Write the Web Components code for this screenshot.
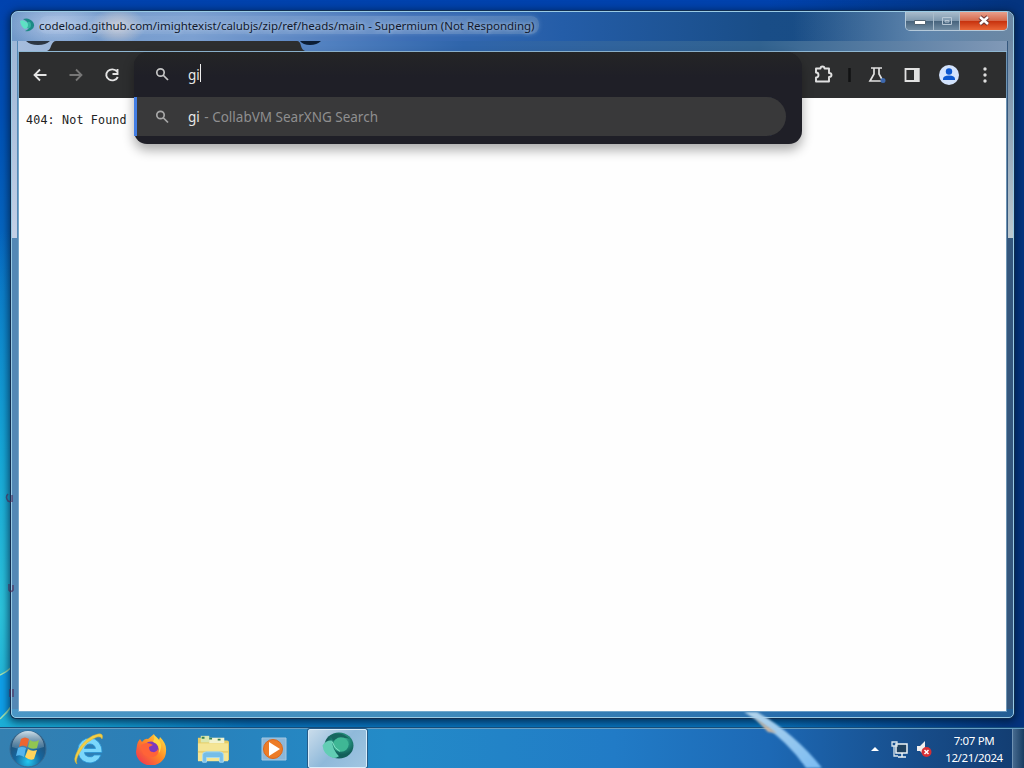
<!DOCTYPE html>
<html lang="en">
<head>
<meta charset="utf-8">
<title>Desktop</title>
<style>
	html, body { margin: 0; height: 100%; overflow: hidden; }
	body { font-family: "Noto Sans", "Open Sans", sans-serif; font-size: 12px; }
</style>
</head>
<body>
<win-desktop>
	<win-window slot="window">
		<span slot="title">codeload.github.com/imightexist/calubjs/zip/ref/heads/main - Supermium (Not Responding)</span>
		<browser-toolbar>
			<omni-box><span slot="typed">gi</span><span slot="match">gi</span><span slot="engine">CollabVM SearXNG Search</span></omni-box>
		</browser-toolbar>
		<page-view>404: Not Found</page-view>
	</win-window>
	<task-bar slot="taskbar">
		<task-icon name="start"></task-icon>
		<task-icon name="ie"></task-icon>
		<task-icon name="firefox"></task-icon>
		<task-icon name="explorer"></task-icon>
		<task-icon name="player"></task-icon>
		<task-icon name="supermium" active></task-icon>
		<system-tray slot="tray"><span slot="time">7:07 PM</span><span slot="date">12/21/2024</span></system-tray>
	</task-bar>
</win-desktop>
<script>
(function() {
	function define(name, html) {
		let template = document.createElement("template");
		template.innerHTML = html;
		customElements.define(name, class extends HTMLElement {
			constructor() {
				super();
				this.attachShadow({mode: "open"}).appendChild(template.content.cloneNode(true));
			}
		});
	}

	const icons = {
		// small title bar version of the app logo
		small: `<svg viewBox="0 0 15 14"><path d="M3 1Q9-1 13 4 16 9 11 12 8 14 5 13 11 10 9 6 7 3 3 1Z" fill="#1d8a86"/><path d="M0 3Q3 1 6 4L10 6Q9 10 5 11 1 9 0 3Z" fill="#5fe0c4"/><path d="M7 4q4-1 4 3t-4 3q2-3 0-6Z" fill="#35b3a0"/></svg>`,
		logo: `<svg viewBox="0 0 34 30"><defs><radialGradient id="g" cx=".6" cy=".35"><stop stop-color="#4fc4a2"/><stop offset=".55" stop-color="#228c79"/><stop offset="1" stop-color="#125f5a"/></radialGradient></defs><ellipse cx="18" cy="14" rx="15" ry="13.500" fill="url(#g)"/><path d="M1 14Q5 8 11 9Q11 18 18 25Q15 27 12 27Q2 24 1 14Z" fill="#62cdb4"/><path d="M9 4Q19-2 29 7Q20 4 12 9Z" fill="#17665f"/><ellipse cx="20" cy="13" rx="8" ry="7.500" fill="#3fb795"/><path d="M11 10Q13 17 19 20" fill="none" stroke="#88dfc8"/></svg>`,
		start: `<svg viewBox="0 0 38 38"><defs><radialGradient id="s" cx=".5" cy=".85" r=".8"><stop stop-color="#22c8f0"/><stop offset=".45" stop-color="#16659d"/><stop offset="1" stop-color="#274866"/></radialGradient><linearGradient id="h" x2="0" y2="1"><stop stop-color="#d7e9f3" stop-opacity=".95"/><stop offset="1" stop-color="#88a9be" stop-opacity=".25"/></linearGradient></defs><circle cx="19" cy="19" r="18" fill="url(#s)" stroke="#376990"/><path d="M3 17a16 16 0 0 1 32 0Q19 23 3 17Z" fill="url(#h)"/><path d="M12 9Q16 6 20 9L18 17Q14 14 10 17Z" fill="#ed6530"/><path d="M21 10Q25 13 30 10L28 18Q23 20 19 17Z" fill="#91c551"/><path d="M9 18Q13 16 17 18L15 27Q11 24 7 26Z" fill="#54b5ed"/><path d="M19 19Q23 22 28 20L25 29Q21 31 16 27Z" fill="#ffd45c"/></svg>`,
		ie: `<svg viewBox="0 0 32 32"><path fill-rule="evenodd" d="M17 5a12 12.500 0 1 0 11 17h-6.500a5.500 4.500 0 0 1-10-2.500H29A12 13.500 0 0 0 17 5Zm-5.500 10.500q1-4.500 5.500-4.500t5.500 4.500Z" fill="#7bd7fb" stroke="#2a93d3" stroke-width=".8"/><path d="M4 31Q-1 28 5 17 14 3 25 1q6-1 4 5-1-3-5-2Q13 8 7 19 2 27 4 31Z" fill="#f2cf45" stroke="#d7b338" stroke-width=".5"/></svg>`,
		firefox: `<svg viewBox="0 0 32 32"><defs><linearGradient id="f" x1="1" y1="0" x2="0" y2="1"><stop stop-color="#ffed4a"/><stop offset=".45" stop-color="#ff8b24"/><stop offset="1" stop-color="#ee2758"/></linearGradient></defs><path d="M2 12Q3 8 5 6l2 3Q10 5 13 6L19 1Q20 5 24 7l1-3Q32 11 31 18A15 14 0 0 1 1 19Z" fill="url(#f)"/><circle cx="16" cy="16" r="7.500" fill="#7d38bd"/><path d="M6 12q6-4 12 0l-4 2q0 5 4 5 3 1 5-3 1 8-6 8Q6 25 6 12Z" fill="#ff6338"/><path d="M18 9q7 2 6 11 6-10-5-18Q20 6 18 9Z" fill="#ffd443"/></svg>`,
		explorer: `<svg viewBox="0 0 34 30"><path d="M1 3h10l3 3h18q2 0 2 2v19H1Z" fill="#e6cc65"/><path d="M4 1h9v7H4z" fill="#dbe8b0"/><path d="M13 3h16v6H13z" fill="#f2f3d0"/><path d="M5 2h3v2H5zM13 3h3v2h-3zM22 4h3v2h-3z" fill="#3a824f"/><path d="M1 9h32v19H1z" fill="#f4e595"/><path d="M1 17h32v2H1z" fill="#e9cf70"/><path d="M6 29v-8q0-3 4-3h14q4 0 4 3v8h-4v-5H10v5Z" fill="#75bde8" stroke="#a7dcf4"/></svg>`,
		player: `<svg viewBox="0 0 26 26"><path d="M1 2h24v22H1z" fill="#8cb7d9" stroke="#a4c8e2"/><circle cx="12" cy="13" r="9.500" fill="#ed7c27" stroke="#db681c"/><path d="M8 6l11 7-11 7Z" fill="#fff"/></svg>`
	};

	define("win-desktop", `
		<style>
		:host {
			display: flex; flex-direction: column; justify-content: flex-end;
			position: relative; width: 1024px; height: 768px; overflow: hidden;
			background:
				radial-gradient(ellipse 260px 380px at 0 610px, #2cc4dc 0, #1ab4dbcc 40%, transparent 100%),
				linear-gradient(90deg, transparent 75%, #04347f 99%),
				linear-gradient(#0042ae, #0050b5 15%, #0870c6 38%, #087fcf 65%, #0872b9);
		}
		.wall { position: absolute; inset: 0; }
		.behind { pointer-events: none; }
		::slotted(win-window) { position: absolute; left: 11px; top: 11px; }
		</style>
		<svg class="wall" width="1024" height="768">
			<path d="M0 674Q6 672 13 667V703Q7 715 0 720Z" fill="#0f9fe8"/>
			<path d="M0 675Q7 672 13 666M0 719Q7 713 13 704" stroke="#a4e6b0" stroke-width="1.500" fill="none"/>
		</svg>
		<slot name="window"></slot>
		<svg class="wall behind" width="1024" height="768" fill="none" stroke="#4b244f" stroke-width="1.600" opacity=".65">
			<path d="M8 494q-3 3 0 7l3 1M12 495v7M9 584v6q2 3 4 0v-5M10 689v8M13 689v8"/>
		</svg>
		<slot name="taskbar"></slot>
	`);

	define("win-window", `
		<style>
		:host {
			display: flex; flex-direction: column; box-sizing: border-box;
			width: 1003px; height: 707px; padding: 0 7px 6px 7px;
			border: 1px solid #9acbe5; border-radius: 7px 7px 5px 5px;
			background:
				linear-gradient(#a9bedccc, #c3d0e6 226px, transparent 226px) 0 0 / 5px 100% no-repeat,
				linear-gradient(#637f9e, #bdc9cf 226px, transparent 226px) 100% 0 / 5px 100% no-repeat,
				linear-gradient(90deg, #4b97c6, #418cbc 40%, #266bab 80%, #245e94) 0 100% / 100% 8px no-repeat,
				linear-gradient(90deg, #5488b5 0 50%, #35577d 50%);
			box-shadow: 0 0 0 1px #102d50, 0 2px 8px 2px #001a3acc;
		}
		.title {
			display: flex; height: 29px; margin: 0 -7px; padding-left: 8px; align-items: flex-start;
			border-radius: 6px 6px 0 0; box-sizing: border-box;
			background:
				radial-gradient(ellipse 28px 18px at 106px 14px, #eadbd2e0, transparent),
				radial-gradient(ellipse 50px 25px at 45px 12px, #d8e0f799, transparent),
				linear-gradient(90deg, transparent 78%, #8eabc899 91%, #6c88a4 100%),
				linear-gradient(90deg, #7199c9, #7ca0d1 18%, #3c6db5 40%, #245da8 55%, #194d87 75%, #174b80);
		}
		.logo { width: 15px; height: 14px; margin-top: 6px; }
		.logo svg { display: block; width: 100%; height: 100%; }
		.text {
			margin: 4px 0 0 4px; padding: 0 4px 0 0; height: 18px; line-height: 19px; white-space: nowrap;
			color: #10192d; font-size: 11.5px; letter-spacing: -.03px;
			background: linear-gradient(90deg, #b8cdea33, #82a4d199 70%, #6189bbaa);
			border-radius: 8px; box-shadow: 0 0 5px #91b3dc55;
			text-shadow: 0 0 4px #cfdcf0;
		}
		.buttons {
			display: flex; margin-left: auto; margin-right: 5px; height: 18px;
			border: 1px solid #b4c9da; border-top: 0; border-radius: 0 0 5px 5px; overflow: hidden;
		}
		.buttons svg { display: block; height: 19px; background: linear-gradient(#a9bccc, #7f99af 45%, #48657e 50%, #7691a8); border-right: 1px solid #a9bccb; }
		.buttons svg:last-child { background: linear-gradient(#e8a08c, #d5694c 45%, #c8330f 50%, #ee6c3c); border: 0; }
		.strip {
			height: 11px; box-sizing: border-box; border-bottom: 1px solid #8fb3cb; margin: 0 -1px;
			background: linear-gradient(90deg, #a6bddd, #5987c5 28%, #2f65ab 45%, #31628f 75%, #8199b7);
		}
		.strip svg { display: block; }
		.client {
			display: flex; flex-direction: column; flex: 1; min-height: 0;
			box-shadow: 0 0 0 1px #8fb9d6a0;
		}
		</style>
		<div class="title">
			<div class="logo">${icons.small}</div>
			<div class="text"><slot name="title"></slot></div>
			<div class="buttons">
				<svg width="27" height="19"><path d="M8.500 8.500h11v4h-11z" fill="#fff" stroke="#536675"/></svg>
				<svg width="25" height="19"><path d="M8.500 5.500h9v7h-9zM11 8.500h4v1.500h-4z" fill="none" stroke="#b7c7d5"/></svg>
				<svg width="47" height="19"><path d="M20 5l8 7M28 5l-8 7" stroke="#6b3736" stroke-width="4.500"/><path d="M20 5l8 7M28 5l-8 7" stroke="#fff" stroke-width="2.500"/></svg>
			</div>
		</div>
		<div class="strip">
			<svg width="330" height="10"><path d="M8 0h24q-4 4-12 4T8 0Z" fill="#2c3542"/><path d="M29 10q3-1 4-5 2-5 5-5h241q3 0 4 5 1 4 4 5Z" fill="#2d2e2f"/><path d="M282 0h21q-4 4-11 4t-10-4Z" fill="#0b1d35"/></svg>
		</div>
		<div class="client"><slot></slot></div>
	`);

	define("browser-toolbar", `
		<style>
		:host {
			display: flex; align-items: center; position: relative; box-sizing: border-box;
			height: 46px; background: #2d2e2f; flex: none;
		}
		svg { display: block; flex: none; }
		.nav { display: flex; gap: 16px; padding-left: 11px; }
		.actions { display: flex; align-items: center; margin-left: auto; padding-right: 12px; }
		::slotted(omni-box) { position: absolute; left: 115px; top: 0; z-index: 1; }
		</style>
		<div class="nav">
			<svg width="20" height="20" fill="none" stroke="#e4e4e4" stroke-width="1.800"><path d="M16.500 10H5M10 4.500L4.500 10l5.500 5.500"/></svg>
			<svg width="20" height="20" fill="none" stroke="#777" stroke-width="1.800"><path d="M3.500 10H15M10 4.500l5.500 5.500-5.500 5.500"/></svg>
			<svg width="20" height="20" fill="none" stroke="#e4e4e4" stroke-width="1.900"><path d="M15 6.500A6 5.500 0 1 0 15.800 12M15.500 4v5h-5"/></svg>
		</div>
		<slot></slot>
		<div class="actions">
			<svg width="22" height="22" fill="none" stroke="#e1e1e1" stroke-width="1.900"><path d="M3 4.500h4.500q0-2 2-2t2 2H16v4.500q2.500 0 2.500 2t-2.500 2V17.500H3v-4q2.500 0 2.500-2.500T3 8.500Z" stroke-linejoin="round"/></svg>
			<svg width="32" height="22"><path d="M14.500 4v14" stroke="#111213" stroke-width="2.500"/></svg>
			<svg width="22" height="22" fill="none" stroke="#e1e1e1" stroke-width="1.700"><path d="M4 4h11M7 4v6l-4 7h13l-4-7V4"/><circle cx="16" cy="16.500" r="2.500" fill="#3d68ae" stroke="none"/></svg>
			<svg width="50" height="22"><path d="M16.500 5h13v12h-13z" fill="none" stroke="#e1e1e1" stroke-width="1.800"/><path d="M25 4h5.500v14H25z" fill="#e1e1e1"/></svg>
			<svg width="22" height="22"><circle cx="10" cy="11" r="10" fill="#d3e3fd"/><circle cx="10" cy="7.500" r="3.200" fill="#0b57d0"/><path d="M4 16v-1q0-3.500 6-3.500t6 3.500v1Z" fill="#0b57d0"/></svg>
			<svg width="33" height="22" fill="#dedede"><circle cx="24" cy="5" r="1.700"/><circle cx="24" cy="11" r="1.700"/><circle cx="24" cy="17" r="1.700"/></svg>
		</div>
	`);

	define("omni-box", `
		<style>
		:host {
			display: flex; flex-direction: column; box-sizing: border-box; width: 668px; height: 92px;
			background: #1f1f27; border-radius: 14px 16px 13px 13px;
			box-shadow: 0 6px 12px #0005; color: #e8e8e8; font-size: 13.5px;
		}
		.row { display: flex; align-items: center; height: 39px; padding-left: 20px; }
		.input { height: 45px; background: linear-gradient(#242526, #1f1f27 55%); border-radius: 14px 16px 0 0; }
		.result { background: #39393a; border-radius: 0 20px 20px 0; margin-right: 16px; box-shadow: inset 3px 0 #437ee4; }
		.row svg { flex: none; margin-right: 18px; }
		.caret { width: 1px; height: 18px; margin-bottom: 4px; background: #eee; }
		.engine { color: #8f8f90; white-space: pre; margin-left: 1px; }
		</style>
		<div class="row input">
			<svg width="16" height="16" fill="none" stroke="#c5c5c5" stroke-width="1.700"><circle cx="6.500" cy="5.500" r="3.700"/><path d="M9 8l5 5"/></svg>
			<slot name="typed"></slot><span class="caret"></span>
		</div>
		<div class="row result">
			<svg width="16" height="16" fill="none" stroke="#a8a8a8" stroke-width="1.700"><circle cx="6.500" cy="6" r="3.700"/><path d="M9 8.500l5 5"/></svg>
			<slot name="match"></slot><span class="engine"> - <slot name="engine"></slot></span>
		</div>
	`);

	define("page-view", `
		<style>
		:host {
			display: block; flex: 1; padding: 15px 7px; background: #fefefe; color: #222;
			font: 11.7px/14px "DejaVu Sans Mono", monospace; letter-spacing: .16px;
		}
		</style>
		<slot></slot>
	`);

	define("task-bar", `
		<style>
		:host {
			display: flex; box-sizing: border-box; height: 40px; position: relative; color: #fff;
			border-top: 1px solid #679fc4; box-shadow: 0 -1px #164d7a;
			background: linear-gradient(90deg, #3480b1, #2a7fb8 15%, #238bc8 38%, #217bc6 60%, #1d69b5 75%, #174c89 90%, #123c70);
		}
		.beam { position: absolute; left: 730px; top: -17px; }
		.icons { display: flex; position: relative; }
		.tray { display: flex; margin-left: auto; position: relative; }
		.peek { width: 11px; border-left: 1px solid #6e91b2; background: linear-gradient(90deg, #466a8f, #183c61); }
		</style>
		<svg class="beam" width="110" height="56"><defs><linearGradient id="b" x2="1" y2="1"><stop stop-color="#b4d5eb"/><stop offset="1" stop-color="#7bbcf3"/></linearGradient><filter id="soft"><feGaussianBlur stdDeviation="1.300"/></filter></defs><path d="M14 0h13Q65 22 92 56H76Q55 25 14 0Z" fill="url(#b)" filter="url(#soft)"/><path d="M25 6l22 15-9-1z" fill="#c8b7a5" filter="url(#soft)"/></svg>
		<div class="icons"><slot></slot></div>
		<div class="tray"><slot name="tray"></slot><div class="peek"></div></div>
	`);

	class TaskIcon extends HTMLElement {
		constructor() {
			super();
			this.attachShadow({mode: "open"});
		}

		connectedCallback() {
			let name = this.getAttribute("name");
			this.shadowRoot.innerHTML = `
				<style>
				:host { display: flex; align-items: center; justify-content: center; box-sizing: border-box; width: 62px; height: 39px; }
				:host([name=start]) { width: 56px; }
				:host([name=ie]) { width: 66px; }
				:host([name=firefox]) { width: 58px; }
				:host([name=explorer]) { width: 66px; }
				:host([name=player]) { width: 56px; }
				:host([active]) {
					width: 59px; margin-left: 6px; border: 1px solid #d9eefb; border-radius: 2px;
					background: linear-gradient(135deg, #c9dceb, #8fb9da 50%, #a0c6e2); padding-bottom: 4px;
					box-shadow: 0 0 0 1px #255b88;
				}
				svg { width: 32px; height: 32px; }
				:host([name=start]) svg { width: 38px; height: 38px; }
				:host([name=player]) svg { width: 26px; height: 26px; }
				:host([name=supermium]) svg { width: 34px; height: 29px; }
				</style>
				${name === "supermium" ? icons.logo : icons[name]}`;
		}
	}
	customElements.define("task-icon", TaskIcon);

	define("system-tray", `
		<style>
		:host { display: flex; align-items: center; }
		.clock {
			display: flex; flex-direction: column; align-items: center; width: 60px; margin: 0 8px 0 11px;
			font-size: 11.5px; line-height: 17px; letter-spacing: -.35px; white-space: nowrap;
		}
		</style>
		<svg width="66" height="24">
			<path d="M4 14l4-4 4 4Z" fill="#fff"/>
			<path d="M29 7h11v9H29zM31 20h8M35 16v4" fill="#20415f" stroke="#edf3f6" stroke-width="1.500"/><path d="M25 5h5v4h-5zM27 9v10h4" fill="none" stroke="#d9e5eb" stroke-width="1.300"/>
			<path d="M50 9h3l5-5v15l-5-5h-3Z" fill="#f1eeee"/><circle cx="59.500" cy="15" r="5" fill="#d72f35"/><path d="M57.500 13l4 4M61.500 13l-4 4" stroke="#fff" stroke-width="1.500"/>
		</svg>
		<div class="clock"><slot name="time"></slot><slot name="date"></slot></div>
	`);
})();
</script>
</body>
</html>
